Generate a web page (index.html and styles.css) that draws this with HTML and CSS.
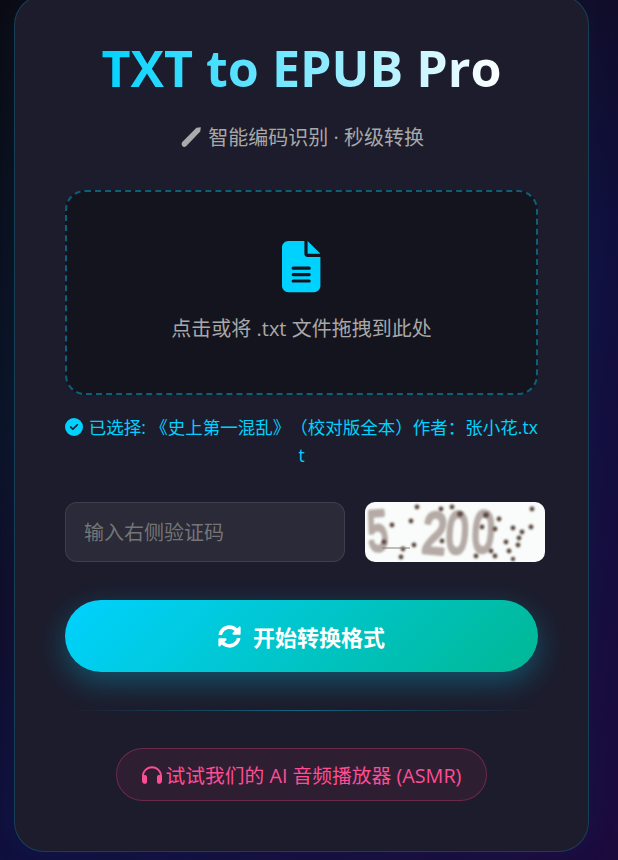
FILE: index.html
```html
<!DOCTYPE html>
<html lang="zh-CN">
<head>
<meta charset="utf-8">
<title>TXT to EPUB Pro</title>
<link rel="stylesheet" href="styles.css">
</head>
<body>
<main class="card">
  <h1 class="title">TXT to EPUB Pro</h1>
  <p class="subtitle">
    <svg class="wand" viewBox="0 0 22 22"><path d="M16 2.5 L20 2 L19.5 6 L6.5 19.5 Q4.5 21 3 19.2 Q1.5 17.5 3 15.5 Z"/></svg>
    智能编码识别 · 秒级转换
  </p>
  <div class="drop">
    <svg class="file-icon" viewBox="0 0 384 512"><path d="M64 0C28.7 0 0 28.7 0 64V448c0 35.3 28.7 64 64 64H320c35.3 0 64-28.7 64-64V160H256c-17.7 0-32-14.3-32-32V0H64zM256 0V128H384L256 0zM112 256H272c8.8 0 16 7.2 16 16s-7.2 16-16 16H112c-8.8 0-16-7.2-16-16s7.2-16 16-16zm0 64H272c8.8 0 16 7.2 16 16s-7.2 16-16 16H112c-8.8 0-16-7.2-16-16s7.2-16 16-16zm0 64H272c8.8 0 16 7.2 16 16s-7.2 16-16 16H112c-8.8 0-16-7.2-16-16s7.2-16 16-16z"/></svg>
    <p class="drop-text">点击或将 .txt 文件拖拽到此处</p>
  </div>
  <p class="selected"><svg class="check" viewBox="0 0 512 512"><path d="M256 512A256 256 0 1 0 256 0a256 256 0 1 0 0 512zM369 209L241 337c-9.4 9.4-24.6 9.4-33.9 0l-64-64c-9.4-9.4-9.4-24.6 0-33.9s24.6-9.4 33.9 0l47 47L335 175c9.4-9.4 24.6-9.4 33.9 0s9.4 24.6 0 33.9z"/></svg> 已选择: 《史上第一混乱》（校对版全本）作者：张小花.txt</p>
  <div class="captcha-row">
    <input class="captcha-input" type="text" placeholder="输入右侧验证码">
    <svg class="captcha" viewBox="0 0 180 60">
      <defs>
        <filter id="soft" x="-10%" y="-10%" width="120%" height="120%"><feGaussianBlur stdDeviation="0.8"/></filter>
        <filter id="softer" x="-10%" y="-10%" width="120%" height="120%"><feGaussianBlur stdDeviation="1"/></filter>
      </defs>
      <rect width="180" height="60" rx="10" class="cap-bg"/>
      <g filter="url(#softer)">
        <text class="cap-digit" transform="translate(4 49) rotate(-4) scale(.62 .98)">5</text>
        <text class="cap-digit" transform="translate(56 50) rotate(5) scale(.74 1)">2</text>
        <text class="cap-digit" transform="translate(80 50) rotate(4) scale(.68 1)">0</text>
        <text class="cap-digit" transform="translate(106 49) rotate(4) scale(.68 1)">0</text>
      </g>
      <g class="cap-dots" filter="url(#soft)">
        <circle cx="52" cy="5" r="2.4"/><circle cx="76" cy="7" r="2.4"/><circle cx="87" cy="5" r="2.4"/><circle cx="95" cy="12" r="2.8"/><circle cx="121" cy="13" r="2.8"/><circle cx="134" cy="17" r="2.4"/><circle cx="167" cy="7" r="2.4"/><circle cx="46" cy="19" r="2.4"/><circle cx="27" cy="23" r="2.4"/><circle cx="117" cy="25" r="2.4"/><circle cx="130" cy="27" r="2.4"/><circle cx="148" cy="26" r="2.4"/><circle cx="157" cy="30" r="2.4"/><circle cx="166" cy="25" r="2.4"/><circle cx="154" cy="36" r="2.4"/><circle cx="141" cy="40" r="2.4"/><circle cx="153" cy="43" r="2.4"/><circle cx="19" cy="40" r="2.4"/><circle cx="77" cy="39" r="2.4"/><circle cx="49" cy="43" r="2.4"/><circle cx="38" cy="47" r="2.4"/><circle cx="36" cy="55" r="2.4"/><circle cx="111" cy="54" r="2.4"/><circle cx="126" cy="49" r="2.4"/><circle cx="130" cy="54" r="2.4"/><circle cx="144" cy="49" r="2.4"/><circle cx="148" cy="57" r="2.2"/>
      </g>
      <line class="cap-line" x1="17" y1="46" x2="45" y2="46"/>
    </svg>
  </div>
  <button class="convert" type="button">
    <svg class="sync" viewBox="0 0 512 512"><path d="M370.72 133.28C339.458 104.008 298.888 87.962 255.848 88c-77.458.068-144.328 53.178-162.791 126.85-1.344 5.363-6.122 9.15-11.651 9.15H24.103c-7.498 0-13.194-6.807-11.807-14.176C33.933 94.924 134.813 8 256 8c66.448 0 126.791 26.136 171.315 68.685L463.03 40.97C478.149 25.851 504 36.559 504 57.941V192c0 13.255-10.745 24-24 24H345.941c-21.382 0-32.09-25.851-16.971-40.971l41.75-41.749zM32 296h134.059c21.382 0 32.09 25.851 16.971 40.971l-41.75 41.75c31.262 29.273 71.835 45.319 114.876 45.28 77.418-.07 144.315-53.144 162.787-126.849 1.344-5.363 6.122-9.15 11.651-9.15h57.304c7.498 0 13.194 6.807 11.807 14.176C478.067 417.076 377.187 504 256 504c-66.448 0-126.791-26.136-171.315-68.685L48.97 471.03C33.851 486.149 8 475.441 8 454.059V320c0-13.255 10.745-24 24-24z"/></svg>
    开始转换格式
  </button>
  <div class="divider"></div>
  <a class="asmr" href="#">
    <svg class="phones" viewBox="0 0 512 512"><path d="M256 80C149.9 80 62.4 159.4 49.6 262c9.4-3.8 19.6-6 30.4-6c26.5 0 48 21.5 48 48V432c0 26.5-21.5 48-48 48c-44.2 0-80-35.8-80-80V384 336 288C0 146.6 114.6 32 256 32s256 114.6 256 256v48 48 16c0 44.2-35.8 80-80 80c-26.5 0-48-21.5-48-48V304c0-26.5 21.5-48 48-48c10.8 0 21 2.2 30.4 6C449.6 159.4 362.1 80 256 80z"/></svg>
    试试我们的 AI 音频播放器 (ASMR)
  </a>
</main>
</body>
</html>
```
FILE: styles.css
```css
* { box-sizing: border-box; }
html, body { margin: 0; height: 860px; overflow: hidden; }
body {
  display: flex;
  flex-direction: column;
  justify-content: flex-end;
  align-items: flex-start;
  padding-bottom: 8px;
  background: linear-gradient(135deg, #0a0a12 0%, #0b1226 29%, #110c2a 42%, #100f3e 58%, #1c0a3c 100%);
  font-family: "Open Sans", "Noto Sans CJK SC", sans-serif;
}
.card {
  flex: none;
  width: 575px;
  margin-left: 14px;
  padding: 40px 50px 50px;
  display: flex;
  flex-direction: column;
  background: #1c1c2c;
  border: 1px solid rgba(0, 210, 255, .2);
  border-radius: 30px;
  box-shadow: 0 0 40px rgba(0, 210, 255, .05);
  text-align: center;
}
.title {
  margin: 0 0 24px;
  font-size: 50.2px;
  line-height: 64px;
  font-weight: 700;
  background: linear-gradient(90deg, #00d2ff, #ffffff);
  -webkit-background-clip: text;
  background-clip: text;
  color: transparent;
  width: fit-content;
  align-self: center;
}
.subtitle {
  margin: 0 0 38px;
  font-size: 20px;
  line-height: 28px;
  color: #a8a8a8;
}
.wand { width: 24px; height: 24px; vertical-align: -4px; fill: #aaaaaa; }
.drop {
  height: 205px;
  display: flex;
  flex-direction: column;
  align-items: center;
  justify-content: center;
  background: #14141e;
  border: 2px dashed rgba(0, 210, 255, .4);
  border-radius: 20px;
}
.file-icon { width: 38.4px; height: 51.2px; margin-top: -1px; fill: #00d2ff; }
.drop-text { margin: 22px 0 0; font-size: 20px; line-height: 28px; color: #a8a8a8; }
.selected {
  margin: 18px 0 33px;
  font-size: 17.5px;
  line-height: 28px;
  color: #00d2ff;
  word-break: break-all;
  text-spacing-trim: space-all;
}
.check { width: 18px; height: 18px; margin-right: 1px; fill: #00d2ff; vertical-align: -2px; }
.captcha-row { display: flex; gap: 20px; }
.captcha-input {
  flex: none;
  width: 280px;
  height: 60px;
  padding: 0 18px;
  background: #2a2a38;
  border: 1px solid rgba(255, 255, 255, .1);
  border-radius: 12px;
  font: 20px "Open Sans", "Noto Sans CJK SC", sans-serif;
  color: #fff;
}
.captcha-input::placeholder { color: #757575; opacity: 1; }
.captcha { flex: none; width: 180px; height: 60px; overflow: visible; }
.cap-bg { fill: #f9fcfa; }
.cap-digit {
  font: 400 58px "Liberation Sans", sans-serif;
  fill: #b5aaa6;
  stroke: #b5aaa6;
  stroke-width: 4px;
  stroke-linejoin: round;
}
.cap-dots { fill: #5a4640; }
.cap-line { stroke: #8b7c76; stroke-width: 1px; }
.convert {
  margin-top: 38px;
  height: 72px;
  display: flex;
  align-items: center;
  justify-content: center;
  gap: 12px;
  border: 0;
  border-radius: 36px;
  background: linear-gradient(135deg, #00d2ff, #00b894);
  box-shadow: 0 10px 30px rgba(0, 210, 255, .3);
  color: #fff;
  font: 700 22px "Open Sans", "Noto Sans CJK SC", sans-serif;
}
.sync { width: 23px; height: 23px; fill: #fff; }
.divider {
  height: 1px;
  margin-top: 38px;
  background: linear-gradient(90deg, transparent, rgba(0, 210, 255, .4), transparent);
}
.asmr {
  margin-top: 37px;
  align-self: center;
  height: 53px;
  padding: 0 25px;
  display: inline-flex;
  align-items: center;
  gap: 4px;
  background: rgba(255, 64, 129, .08);
  border: 1px solid rgba(255, 64, 129, .3);
  border-radius: 27px;
  color: #ff4d94;
  font-size: 19.75px;
  text-decoration: none;
}
.phones { width: 20px; height: 20px; fill: #ff4d94; }
```
